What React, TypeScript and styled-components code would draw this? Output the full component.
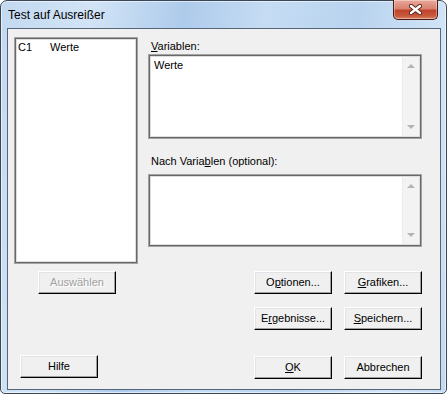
import styled, { createGlobalStyle } from 'styled-components';

const GlobalStyle = createGlobalStyle`
  html, body {
    margin: 0;
    padding: 0;
    background: #fff;
  }
  body {
    font-family: 'Liberation Sans', Tahoma, Arial, sans-serif;
    font-size: 11px;
    color: #000;
  }
`;

const Window = styled.div`
  width: 447px;
  height: 394px;
  box-sizing: border-box;
  display: flex;
  flex-direction: column;
  padding: 0 5px 3px 6px;
  border: 1px solid #3b4756;
  border-radius: 7px 7px 5px 5px;
  background: linear-gradient(
    100deg,
    #c3d9f0 0%,
    #d2e4f6 18%,
    #aecbeb 36%,
    #c5dcf3 52%,
    #b9d3ef 70%,
    #d3e5f7 88%,
    #c2d9f1 100%
  );
  box-shadow: inset 0 0 0 1px rgba(255, 255, 255, 0.55);
`;

const TitleBar = styled.div`
  height: 27px;
  display: flex;
  align-items: center;
`;

const Title = styled.span`
  padding-left: 1px;
  font-size: 12px;
  color: #000;
`;

const CloseButton = styled.div`
  margin-left: auto;
  margin-right: 3px;
  margin-top: -1px;
  align-self: flex-start;
  width: 45px;
  height: 20px;
  box-sizing: border-box;
  display: flex;
  align-items: center;
  justify-content: center;
  border: 1px solid #4a1a12;
  border-top: none;
  border-radius: 0 0 5px 5px;
  background: linear-gradient(
    to bottom,
    #e9a99b 0%,
    #d9826f 45%,
    #c0442b 55%,
    #c75a3e 85%,
    #dd8a6c 100%
  );
  box-shadow: inset 0 0 0 1px rgba(255, 255, 255, 0.35);
`;

const Client = styled.div`
  flex: 1;
  display: flex;
  flex-direction: column;
  padding: 8px 18px 0 6px;
  border: 1px solid #56667a;
  background: #f0f0f0;
`;

const TopSection = styled.div`
  display: flex;
  gap: 10px;
  height: 227px;
`;

const Sunken = styled.div<{ $w: number; $h: number }>`
  width: ${p => p.$w}px;
  height: ${p => p.$h}px;
  box-sizing: border-box;
  border: 1px solid #a3a3a3;
  padding: 2px;
  background: #fff;
  box-shadow: inset 0 0 0 1px #686868, inset 0 0 0 2px #dedede;
  display: flex;
`;

const ListContent = styled.div`
  flex: 1;
  padding: 0 0 0 1px;
`;

const ListRow = styled.div`
  display: flex;
  line-height: 14px;
`;

const ListCol = styled.span<{ $w?: number }>`
  width: ${p => (p.$w ? `${p.$w}px` : 'auto')};
`;

const FieldColumn = styled.div`
  width: 274px;
  display: flex;
  flex-direction: column;
`;

const Label = styled.div<{ $top: number; $bottom: number }>`
  margin-top: ${p => p.$top}px;
  margin-bottom: ${p => p.$bottom}px;
  padding-left: 3px;
  line-height: 15px;
`;

const FieldText = styled.div`
  flex: 1;
  padding: 1px 0 0 3px;
  line-height: 14px;
`;

const ScrollBar = styled.div`
  width: 17px;
  display: flex;
  flex-direction: column;
  justify-content: space-between;
  align-items: center;
  padding: 7px 0 7px;
  box-sizing: border-box;
  background: #f3f3f3;
  border-left: 1px solid #ececec;
`;

const Arrow = styled.div<{ $down?: boolean }>`
  width: 0;
  height: 0;
  border-left: 4px solid transparent;
  border-right: 4px solid transparent;
  ${p =>
    p.$down
      ? 'border-top: 4px solid #b3b3b3;'
      : 'border-bottom: 4px solid #b3b3b3;'}
`;

const ButtonRow = styled.div<{ $top: number }>`
  display: flex;
  align-items: flex-start;
  margin-top: ${p => p.$top}px;
`;

const LeftSlot = styled.div<{ $center?: boolean; $pad?: number }>`
  width: 126px;
  display: flex;
  justify-content: ${p => (p.$center ? 'center' : 'flex-start')};
  padding-left: ${p => p.$pad || 0}px;
  box-sizing: border-box;
`;

const RightGroup = styled.div<{ $shift?: number }>`
  margin-left: auto;
  margin-top: ${p => p.$shift || 0}px;
  display: flex;
  gap: 12px;
`;

const Button = styled.div<{ $disabled?: boolean }>`
  width: 78px;
  height: 23px;
  box-sizing: border-box;
  display: flex;
  align-items: center;
  justify-content: center;
  background: #f0f0f0;
  border: 1px solid;
  border-color: #fff #000 #000 #fff;
  box-shadow: inset -1px -1px 0 #a0a0a0, inset 1px 1px 0 #e3e3e3;
  color: ${p => (p.$disabled ? '#a0a0a0' : '#000')};
  text-shadow: ${p => (p.$disabled ? '1px 1px 0 #fff' : 'none')};
  padding-bottom: 1px;
`;

const Key = styled.span`
  text-decoration: underline;
  text-underline-offset: 1px;
`;

const CloseIcon = () => (
  <svg width="13" height="11" viewBox="0 0 13 11">
    <path d="M2 2 L11 9 M11 2 L2 9" stroke="#5a2318" strokeWidth="4.2" strokeLinecap="round" fill="none" />
    <path d="M2 2 L11 9 M11 2 L2 9" stroke="#fff" strokeWidth="2.4" strokeLinecap="round" fill="none" />
  </svg>
);

const ScrollField = ({ h, text }: { h: number; text?: string }) => (
  <Sunken $w={274} $h={h}>
    <FieldText>{text}</FieldText>
    <ScrollBar>
      <Arrow />
      <Arrow $down />
    </ScrollBar>
  </Sunken>
);

export default function App() {
  return (
    <>
      <GlobalStyle />
      <Window>
        <TitleBar>
          <Title>Test auf Ausreißer</Title>
          <CloseButton>
            <CloseIcon />
          </CloseButton>
        </TitleBar>

        <Client>
          <TopSection>
            <Sunken $w={126} $h={227}>
              <ListContent>
                <ListRow>
                  <ListCol $w={32}>C1</ListCol>
                  <ListCol>Werte</ListCol>
                </ListRow>
              </ListContent>
            </Sunken>

            <FieldColumn>
              <Label $top={2} $bottom={0}>
                <Key>V</Key>ariablen:
              </Label>
              <ScrollField h={85} text="Werte" />
              <Label $top={15} $bottom={5}>
                Nach Varia<Key>b</Key>len (optional):
              </Label>
              <ScrollField h={73} />
            </FieldColumn>
          </TopSection>

          <ButtonRow $top={7}>
            <LeftSlot $center>
              <Button $disabled>Auswählen</Button>
            </LeftSlot>
            <RightGroup>
              <Button>
                O<Key>p</Key>tionen...
              </Button>
              <Button>
                <Key>G</Key>rafiken...
              </Button>
            </RightGroup>
          </ButtonRow>

          <ButtonRow $top={13}>
            <RightGroup>
              <Button>
                E<Key>r</Key>gebnisse...
              </Button>
              <Button>
                <Key>S</Key>peichern...
              </Button>
            </RightGroup>
          </ButtonRow>

          <ButtonRow $top={25}>
            <LeftSlot $pad={6}>
              <Button>Hilfe</Button>
            </LeftSlot>
            <RightGroup $shift={1}>
              <Button>
                <Key>O</Key>K
              </Button>
              <Button>Abbrechen</Button>
            </RightGroup>
          </ButtonRow>
        </Client>
      </Window>
    </>
  );
}
